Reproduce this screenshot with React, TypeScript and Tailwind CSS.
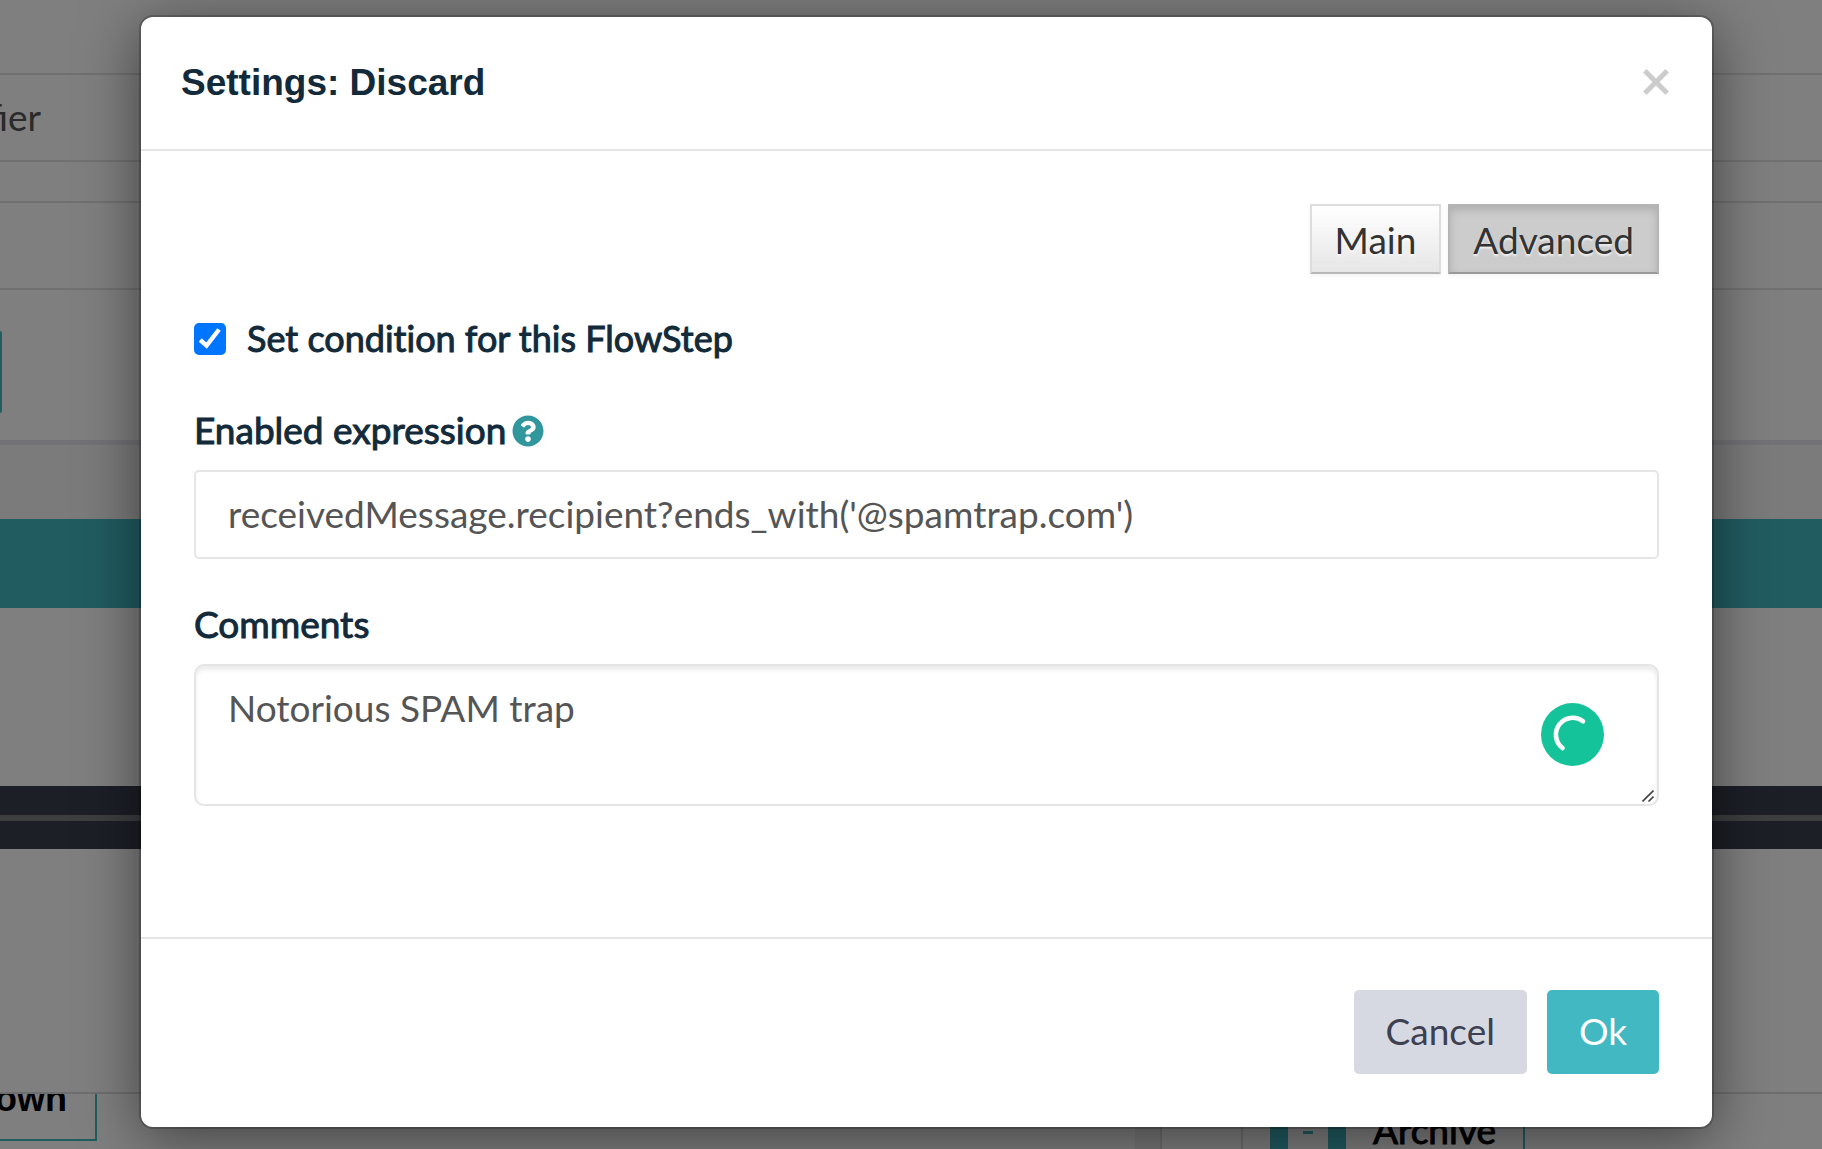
import React, { useState } from 'react';
import { FaQuestionCircle } from 'react-icons/fa';

const TABS = ['Main', 'Advanced'];

const tabBase =
    'h-[70px] border-2 px-[23px] pt-[2px] text-[37px] leading-[64px] text-[#333333] [text-shadow:0_2px_2px_rgba(255,255,255,0.75)]';
const tabIdle =
    'border-[#dddddd] border-b-[#b8b8b8] bg-linear-to-b from-white to-[#e6e6e6] shadow-[0_2px_4px_rgba(0,0,0,0.05)]';
const tabActive =
    'border-[#b5b5b5] border-b-[#999999] bg-[#cccccc] shadow-[inset_0_4px_8px_rgba(0,0,0,0.15),0_2px_4px_rgba(0,0,0,0.05)]';

const FlowPage: React.FC = () => (
    <div className="flex h-full flex-col bg-white" aria-hidden="true">
        <div className="h-[75px] shrink-0 border-b-2 border-[#e2e2e2]" />
        <div className="flex h-[87px] shrink-0 items-center border-b-2 border-[#e2e2e2] pb-[2px]">
            <span className="flex w-[41px] justify-end overflow-hidden text-[37px] text-[#555555]">fier</span>
        </div>
        <div className="h-[41px] shrink-0 border-b-2 border-[#e2e2e2]" />
        <div className="h-[87px] shrink-0 border-b-2 border-[#e2e2e2]" />
        <div className="flex h-[155px] shrink-0 items-end border-b-[5px] border-[#e6e6ef] pb-[27px]">
            <div className="h-[82px] w-[2px] rounded-r-sm bg-[#42b8c2]" />
        </div>
        <div className="h-[74px] shrink-0 bg-[#f6f6f6]" />
        <div className="h-[89px] shrink-0 bg-[#42b8c2]" />
        <div className="h-[178px] shrink-0" />
        <div className="flex h-[63px] shrink-0 items-center bg-[#3a3f4e]">
            <div className="h-[6px] w-full bg-[#7c7d83]" />
        </div>
        <div className="h-[245px] shrink-0 border-b-2 border-[#dcdcdc]" />
        <div className="flex flex-1 items-start overflow-hidden">
            <div className="flex h-[47px] w-[97px] justify-end border-r-2 border-b-2 border-[#42b8c2] pr-7">
                <span className="-mt-[15px] text-[36px] leading-[40px] font-bold text-black [font-family:'Liberation_Sans',sans-serif]">
                    own
                </span>
            </div>
            <div className="ml-auto flex h-[57px] w-[687px] border-l-[25px] border-[#f0f0f0]">
                <div className="h-full w-[83px] border-x-2 border-[#dcdcdc]" />
                <div className="ml-[27px] flex h-full border-r-2 border-[#42b8c2]">
                    <div className="flex w-[76px] items-center justify-center border-x-[18px] border-[#42b8c2]">
                        <span className="mt-5 h-[3px] w-[10px] bg-[#42b8c2]" />
                    </div>
                    <span className="px-[27px] pt-[16px] text-[37px] leading-[40px] text-black [-webkit-text-stroke:1px_black]">
                        Archive
                    </span>
                </div>
            </div>
        </div>
    </div>
);

const App: React.FC = () => {
    const [tab, setTab] = useState('Advanced');
    const [enabled, setEnabled] = useState(true);
    const [expression, setExpression] = useState("receivedMessage.recipient?ends_with('@spamtrap.com')");
    const [comments, setComments] = useState('Notorious SPAM trap');

    const labelClass = 'pb-[2px] leading-[42px] text-[#132a3a] [-webkit-text-stroke:1px_#132a3a]';

    return (
        <div className="relative h-screen overflow-hidden [font-family:Lato,sans-serif]">
            <FlowPage />
            <div className="absolute inset-0 bg-black/50 pt-[17px] pr-[110px] pl-[141px] [font-variant-ligatures:none]">
                <div
                    role="dialog"
                    aria-labelledby="dialog-title"
                    className="rounded-[12px] bg-white shadow-[0_0_0_2px_rgba(0,0,0,0.2),0_10px_60px_rgba(0,0,0,0.5)]"
                >
                    <header className="flex h-[134px] items-center justify-between border-b-2 border-[#e5e5e5] pr-[39px] pb-[2px] pl-10">
                        <h1
                            id="dialog-title"
                            className="pt-[2px] text-[37px] leading-[44px] font-bold text-[#132a3a] [font-family:'Liberation_Sans',sans-serif]"
                        >
                            Settings: Discard
                        </h1>
                        <button type="button" aria-label="Close" className="p-1">
                            <svg className="size-[26px]" viewBox="0 0 26 26" stroke="#cccccc" strokeWidth="5">
                                <path d="M1.8 1.8 24.2 24.2M24.2 1.8 1.8 24.2" />
                            </svg>
                        </button>
                    </header>

                    <div className="h-[788px] border-b-2 border-[#e5e5e5] px-[53px] pt-[53px]">
                        <div className="flex justify-end gap-[7px]">
                            {TABS.map((name) => (
                                <button
                                    key={name}
                                    type="button"
                                    onClick={() => setTab(name)}
                                    className={`${tabBase} ${tab === name ? tabActive : tabIdle}`}
                                >
                                    {name}
                                </button>
                            ))}
                        </div>

                        <div className="mt-[43px] flex items-center gap-[21px]">
                            <span className="relative size-8">
                                <input
                                    id="condition"
                                    type="checkbox"
                                    checked={enabled}
                                    onChange={(e) => setEnabled(e.target.checked)}
                                    className="block size-8 appearance-none rounded-[5px] border-2 border-[#767676] checked:border-[#0075ff] checked:bg-[#0075ff]"
                                />
                                {enabled && (
                                    <svg
                                        className="pointer-events-none absolute inset-0 size-8"
                                        viewBox="0 0 32 32"
                                        fill="none"
                                        stroke="white"
                                        strokeWidth="4.4"
                                    >
                                        <path d="M6.2 17 12.6 22.6 25 6.5" />
                                    </svg>
                                )}
                            </span>
                            <label htmlFor="condition" className={`text-[36px] ${labelClass}`}>
                                Set condition for this FlowStep
                            </label>
                        </div>

                        <div className="mt-12 flex items-center gap-[6px]">
                            <label htmlFor="expression" className={`text-[37px] ${labelClass}`}>
                                Enabled expression
                            </label>
                            <FaQuestionCircle className="size-8 text-[#31979d]" />
                        </div>
                        <input
                            id="expression"
                            type="text"
                            value={expression}
                            onChange={(e) => setExpression(e.target.value)}
                            className="mt-[17px] block h-[89px] w-full rounded-[5px] border-2 border-[#e5e5e5] px-8 pb-[3px] text-[37px] text-[#555555] outline-none"
                        />

                        <label htmlFor="comments" className={`mt-[44px] block text-[37px] ${labelClass}`}>
                            Comments
                        </label>
                        <div className="relative mt-[17px]">
                            <textarea
                                id="comments"
                                value={comments}
                                onChange={(e) => setComments(e.target.value)}
                                className="block h-[142px] w-full resize-none rounded-[10px] border-2 border-[#e5e5e5] px-8 py-5 text-[37px] leading-[44px] text-[#555555] shadow-[inset_0_4px_4px_rgba(0,0,0,0.08)] outline-none"
                            />
                            <svg className="absolute top-[39px] right-[55px] size-[63px]" viewBox="0 0 63 63" fill="none">
                                <circle cx="31.5" cy="31.5" r="31.5" fill="#15c39a" />
                                <path
                                    d="M42 18.3A16.5 16.5 0 0 0 21.5 45"
                                    stroke="white"
                                    strokeWidth="4.6"
                                    strokeLinecap="round"
                                />
                            </svg>
                            <svg
                                className="absolute right-[5px] bottom-[4px] size-3"
                                viewBox="0 0 12 12"
                                stroke="#444444"
                                strokeWidth="1.6"
                            >
                                <path d="M0.5 11.5 11.5 0.5M6.5 11.5 11.5 6.5" />
                            </svg>
                        </div>
                    </div>

                    <footer className="flex justify-end gap-5 px-[53px] pt-[51px] pb-[53px]">
                        <button
                            type="button"
                            className="h-[84px] rounded-[5px] bg-[#d6d9e2] px-8 pb-[2px] text-[37px] text-[#3d4050]"
                        >
                            Cancel
                        </button>
                        <button
                            type="button"
                            className="h-[84px] rounded-[5px] bg-[#42b8c2] px-8 pb-[2px] text-[37px] text-white"
                        >
                            Ok
                        </button>
                    </footer>
                </div>
            </div>
        </div>
    );
};

export default App;
